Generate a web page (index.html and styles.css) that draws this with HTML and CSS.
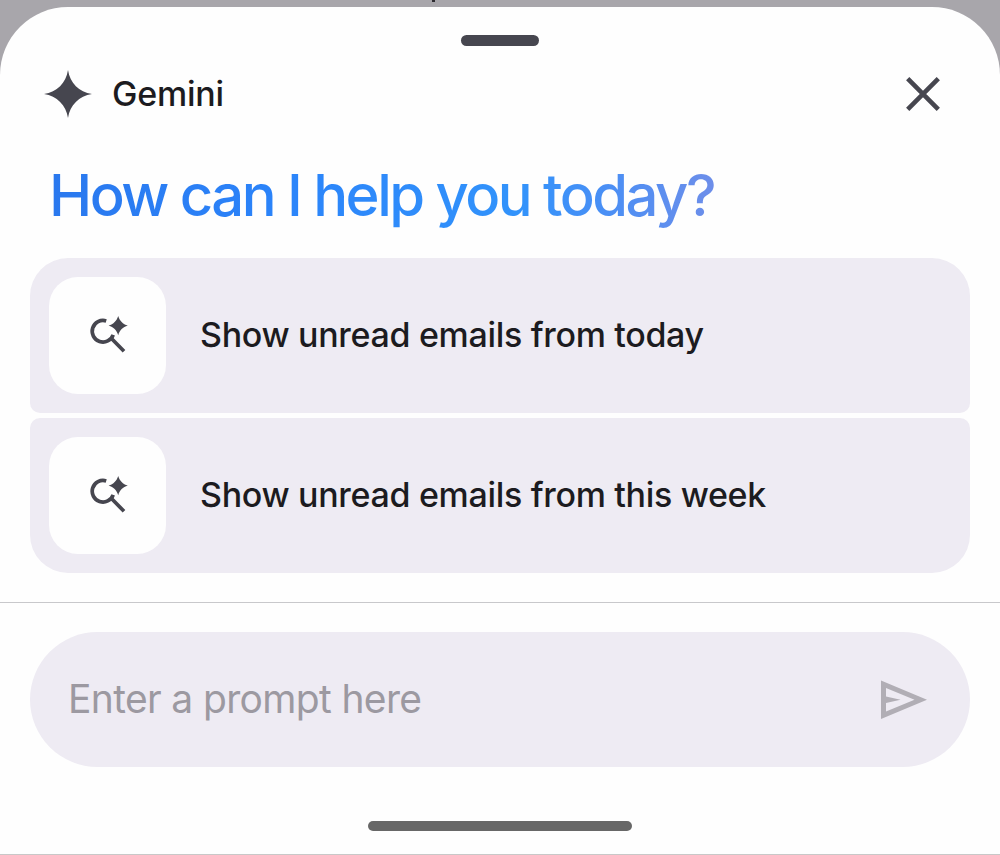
FILE: index.html
```html
<!DOCTYPE html>
<html lang="en">
<head>
    <meta charset="UTF-8">
    <meta name="viewport" content="width=device-width, initial-scale=1.0">
    <title>Gemini</title>
    <link rel="stylesheet" href="styles.css">
</head>
<body>

    <span class="backdrop-dot"></span>

    <div class="sheet">
        <div class="handle"></div>

        <header class="header">
            <svg class="spark" viewBox="0 0 48 48">
                <path d="M24 0C26 13 35 22 48 24C35 26 26 35 24 48C22 35 13 26 0 24C13 22 22 13 24 0Z"/>
            </svg>
            <span class="title">Gemini</span>
            <button class="close" aria-label="Close">
                <svg viewBox="0 0 34 34">
                    <path d="M1.700 1.700L32.300 32.300M32.300 1.700L1.700 32.300"/>
                </svg>
            </button>
        </header>

        <h1 class="greeting"><span>How can I help you today?</span></h1>

        <div class="suggestions">
            <div class="suggestion">
                <div class="tile">
                    <svg viewBox="0 0 40 40">
                        <path class="lens" d="M17.200 4.900A10.800 10.800 0 1 0 24.200 18.800M21.500 21.500L35 35.300"/>
                        <path class="star" d="M29.200 0C30.800 5 33.800 8 38.800 9.600C33.800 11.200 30.800 14.200 29.200 19.200C27.600 14.200 24.600 11.200 19.600 9.600C24.600 8 27.600 5 29.200 0Z"/>
                    </svg>
                </div>
                <span class="label">Show unread emails from today</span>
            </div>
            <div class="suggestion">
                <div class="tile">
                    <svg viewBox="0 0 40 40">
                        <path class="lens" d="M17.200 4.900A10.800 10.800 0 1 0 24.200 18.800M21.500 21.500L35 35.300"/>
                        <path class="star" d="M29.200 0C30.800 5 33.800 8 38.800 9.600C33.800 11.200 30.800 14.200 29.200 19.200C27.600 14.200 24.600 11.200 19.600 9.600C24.600 8 27.600 5 29.200 0Z"/>
                    </svg>
                </div>
                <span class="label">Show unread emails from this week</span>
            </div>
        </div>

        <div class="prompt-area">
            <div class="prompt">
                <span class="placeholder">Enter a prompt here</span>
                <svg class="send" viewBox="0 0 46 39">
                    <path fill-rule="evenodd" d="M0 0.500L46 19.700L0 39ZM5 8V16.500L19.500 19.700L5 22.900V31.500L33.500 19.700Z"/>
                </svg>
            </div>
        </div>

        <div class="nav-bar"></div>
    </div>

</body>
</html>
```

FILE: styles.css
```css
* {
    box-sizing: border-box;
}

body {
    margin: 0;
    padding-top: 7px;
    height: 855px;
    overflow: hidden;
    background-color: #a8a6ab;
    font-family: Inter, Roboto, sans-serif;
    color: #1c1b20;
}

.backdrop-dot {
    position: absolute;
    top: 0;
    left: 432px;
    width: 3px;
    height: 2px;
    background-color: #2e2c31;
}

.sheet {
    height: 848px;
    display: flex;
    flex-direction: column;
    background-color: #fefefe;
    border-radius: 68px 68px 0 0;
    border-bottom: 1px solid #c8c8c8;
}

.handle {
    width: 78px;
    height: 11px;
    margin: 28px auto 0;
    border-radius: 6px;
    background-color: #46464f;
}

.header {
    display: flex;
    align-items: center;
    height: 48px;
    margin-top: 24px;
    padding: 0 60px 0 44px;
}

.spark {
    width: 48px;
    height: 48px;
    fill: #46464f;
}

.title {
    margin-left: 20px;
    font-size: 34px;
    line-height: 48px;
    font-weight: 500;
    letter-spacing: -0.2px;
    white-space: nowrap;
}

.close {
    width: 34px;
    height: 34px;
    margin-left: auto;
    padding: 0;
    border: 0;
    background: none;
}

.close svg {
    display: block;
    fill: none;
    stroke: #46464f;
    stroke-width: 4.6;
}

.greeting {
    height: 80px;
    margin: 37px 0 0;
    padding-left: 49px;
    font-size: 58px;
    line-height: 80px;
    font-weight: 550;
    letter-spacing: -2.52px;
    white-space: nowrap;
}

.greeting span {
    display: inline-block;
    padding-right: 6px;
    color: transparent;
    background: linear-gradient(90deg, #2a78ee 0%, #2b84fa 35%, #3293fb 70%, #4a8ff5 83%, #6f8ee9 100%);
    -webkit-background-clip: text;
    background-clip: text;
}

.suggestions {
    display: flex;
    flex-direction: column;
    gap: 5px;
    margin: 23px 30px 0;
}

.suggestion {
    display: flex;
    align-items: center;
    height: 155px;
    padding-left: 19px;
    background-color: #eeebf3;
    border-radius: 38px 38px 10px 10px;
}

.suggestion:last-child {
    border-radius: 10px 10px 38px 38px;
}

.tile {
    display: flex;
    align-items: center;
    justify-content: center;
    width: 117px;
    height: 117px;
    border-radius: 29px;
    background-color: #fefefe;
}

.tile svg {
    width: 40px;
    height: 40px;
    margin-left: 3px;
}

.lens {
    fill: none;
    stroke: #46464f;
    stroke-width: 3.7;
}

.star {
    fill: #46464f;
}

.label {
    margin-left: 34px;
    padding-bottom: 2px;
    font-size: 34px;
    line-height: 48px;
    font-weight: 500;
    letter-spacing: -0.32px;
    white-space: nowrap;
}

.prompt-area {
    margin-top: 29px;
    padding: 29px 30px 0;
    border-top: 1px solid #c8c8cb;
}

.prompt {
    display: flex;
    align-items: center;
    justify-content: space-between;
    height: 135px;
    padding: 0 43px 0 38px;
    border-radius: 68px;
    background-color: #eeebf3;
}

.placeholder {
    padding-bottom: 2px;
    font-size: 39px;
    line-height: 52px;
    letter-spacing: -0.65px;
    color: #9c99a1;
    white-space: nowrap;
}

.send {
    width: 46px;
    height: 39px;
    fill: #b1aeb5;
}

.nav-bar {
    width: 264px;
    height: 10px;
    margin: 54px auto 0;
    border-radius: 5px;
    background-color: #676767;
}
```
